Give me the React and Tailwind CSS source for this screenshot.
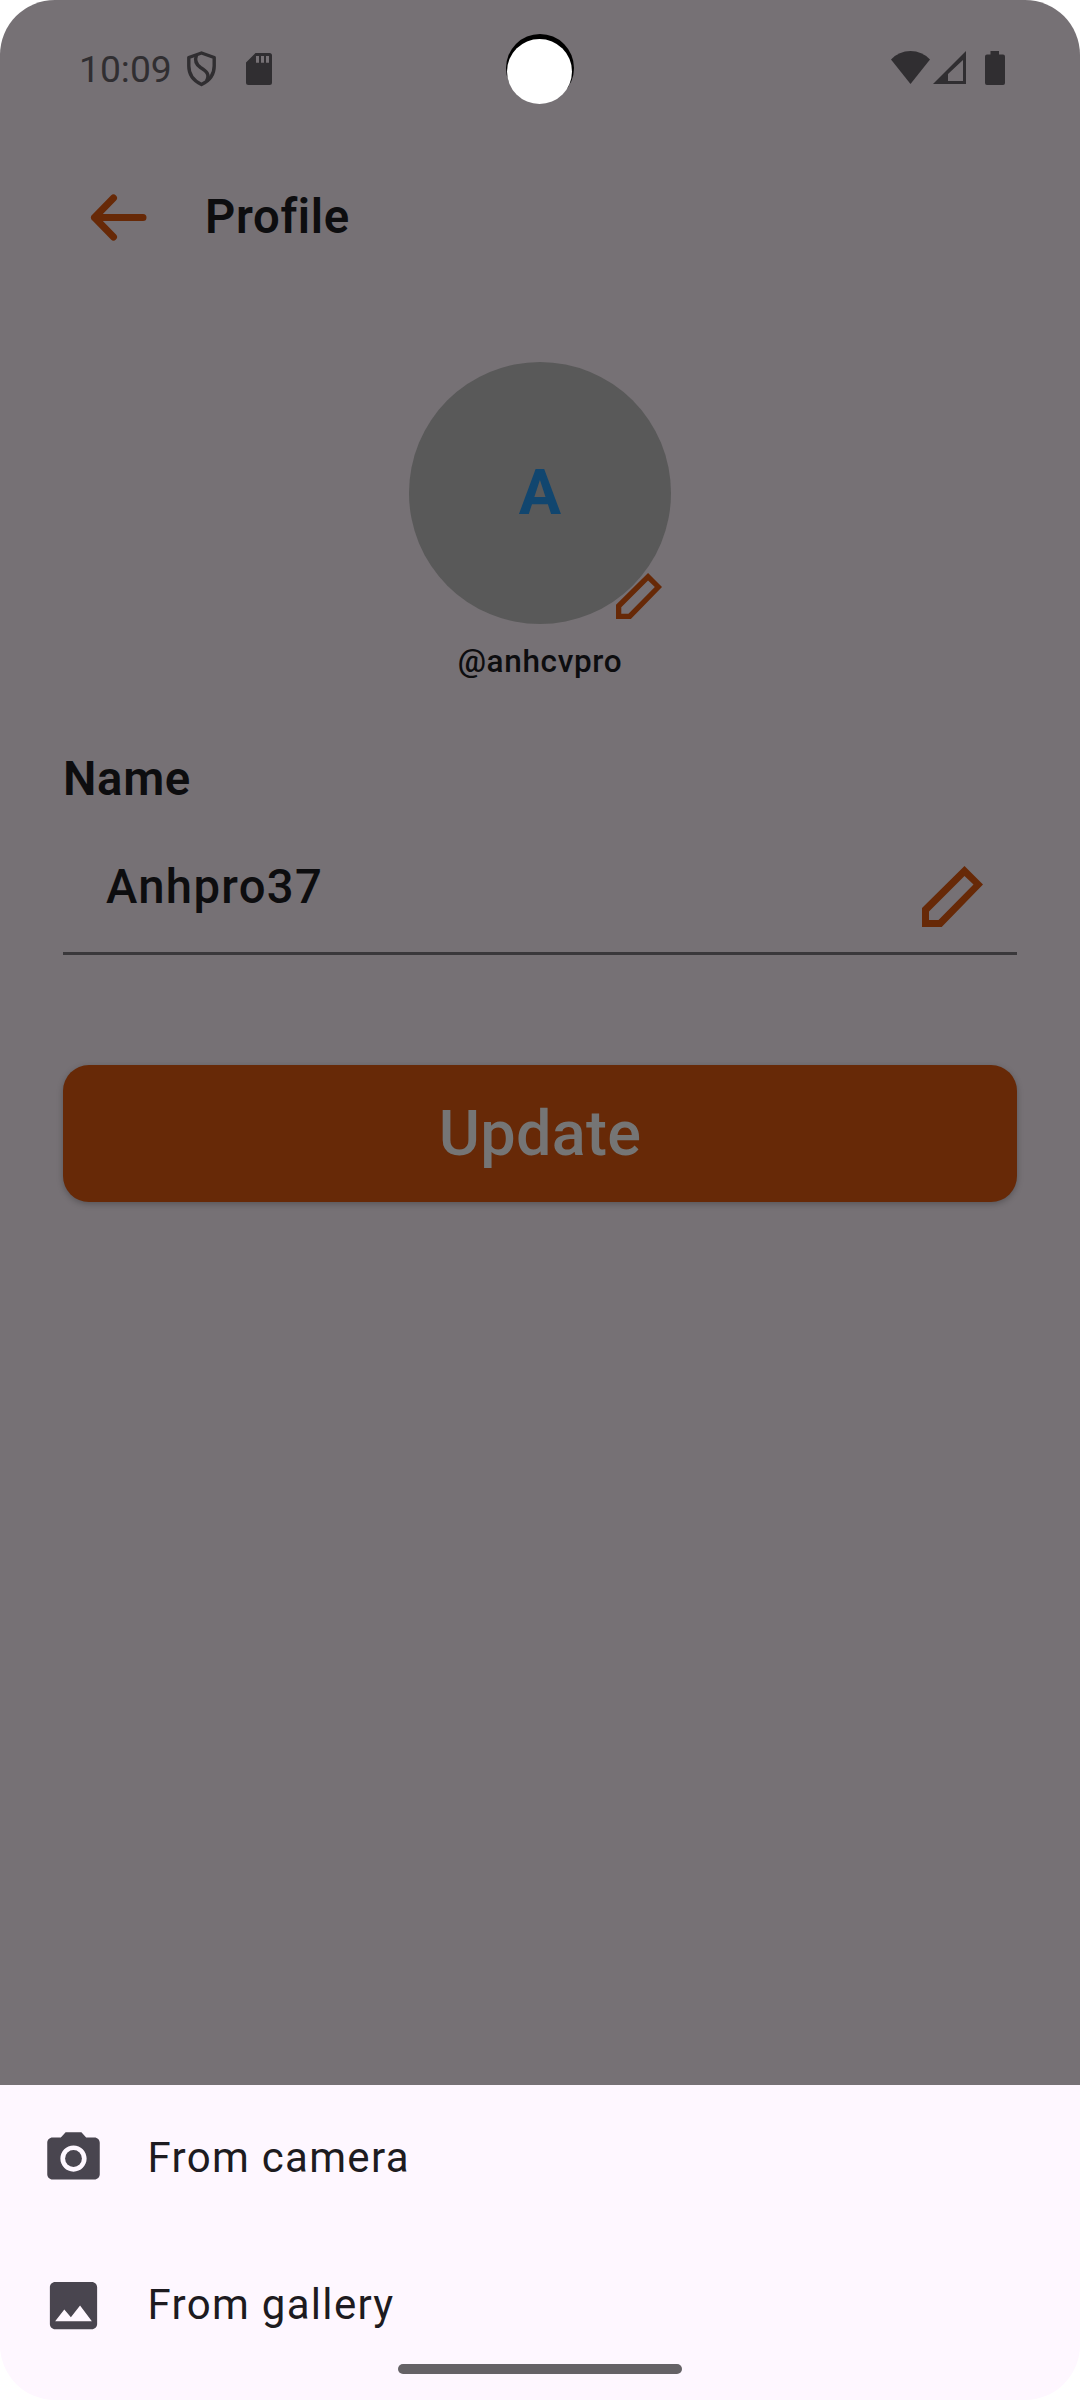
import React from "react";

function Shield() {
  return (
    <svg className="block h-[36px] w-[32px]" viewBox="0 0 32 36" fill="none" stroke="#302e31" strokeWidth="3.4" strokeLinejoin="round">
      <path d="M15.500 2 L28.200 6.500 V15 C28.200 23.500 23 30 15.500 33.500 C8 30 2.800 23.500 2.800 15 V6.500 Z" />
      <path d="M10.500 4 C8.500 9.500 10 13.500 14.500 16.500 C21 20.500 24 23.500 20.500 30" />
    </svg>
  );
}

function SdCard() {
  return (
    <svg className="block h-[32px] w-[26px]" viewBox="0 0 26 32" fill="#302e31" fillRule="evenodd">
      <path d="M9.500 0 H23.500 Q26 0 26 2.500 V29.500 Q26 32 23.500 32 H2.500 Q0 32 0 29.500 V9.500 Z M10 3 V9.700 H13 V3 Z M15 3 V9.700 H18 V3 Z M20 3 V9.700 H23 V3 Z" />
    </svg>
  );
}

function StatusBar() {
  return (
    <div className="relative flex h-[136px] items-center pl-[79px] pr-[75px] text-[#302e31]">
      <span className="mt-px w-[93px] text-[37.25px] leading-[44px]">10:09</span>
      <div className="ml-[14px] mt-[2px]"><Shield /></div>
      <div className="ml-[28px] mt-[2px]"><SdCard /></div>
      <div className="ml-auto flex">
        <svg className="block h-[36px] w-[114px]" viewBox="0 0 114 36" fill="#302e31">
          <path d="M0 9.500 Q8 1 19.500 1 Q31 1 39 9.500 L19.500 34 Z" />
          <path fillRule="evenodd" d="M75 1 V34 H42 Z M72 10 L57 24 V31 H72 Z" />
          <path d="M99.500 1 H108 V4.500 H112 Q114 4.500 114 6.500 V33 Q114 35 112 35 H96 Q94 35 94 33 V6.500 Q94 4.500 96 4.500 H99.500 Z" />
        </svg>
      </div>
      <div className="absolute left-[506px] top-[34px] h-[68px] w-[68px] rounded-full bg-black" />
      <div className="absolute left-[507px] top-[39px] h-[65px] w-[65px] rounded-full bg-white" />
    </div>
  );
}

function Pencil({ className }) {
  return (
    <svg className={className} viewBox="0 0 61 61" fill="#672907" fillRule="evenodd">
      <path d="M42.500 0 L61 18.500 L19.700 61 H0 V42 Z M42.500 10 L7 45.500 V54 H16.500 L51.500 18.500 Z" />
    </svg>
  );
}

export default function App() {
  return (
    <div className="flex h-[2400px] w-[1080px] flex-col bg-white font-[Roboto,sans-serif] text-[#0d0d0f]">
      <main className="h-[2085px] rounded-t-[55px] bg-[#767175]">
        <StatusBar />
        <header className="flex h-[160px] items-center pl-[90px] pt-[2px]">
          <svg className="block h-[48px] w-[58px]" viewBox="0 0 58 48" fill="none" stroke="#672907" strokeWidth="7" strokeLinecap="round" strokeLinejoin="round">
            <path d="M53 24.500 H4.500 M23.500 5 L4.500 24.500 L23.500 44" />
          </svg>
          <h1 className="ml-[57px] text-[47.25px] font-semibold leading-[56px] tracking-[0.66px]">Profile</h1>
        </header>

        <section className="mt-[66px] flex flex-col items-center">
          <div className="relative flex size-[262px] items-center justify-center rounded-full bg-[#595959]">
            <span className="text-[63px] font-bold leading-[74px] text-[#11466f]">A</span>
            <div className="absolute left-[207px] top-[211px]">
              <Pencil className="block size-[46px]" />
            </div>
          </div>
          <p className="mt-[19px] text-[31.5px] font-medium leading-[38px] tracking-[0.66px]">@anhcvpro</p>
        </section>

        <section className="mx-[63px] mt-[70px]">
          <h2 className="text-[47.25px] font-semibold leading-[56px] tracking-[0.66px]">Name</h2>
          <div className="mt-[26px] flex h-[122px] justify-between border-b-[3px] border-[#3a383b] pl-[43px] pr-[34px]">
            <span className="mt-[26px] text-[47.25px] font-medium leading-[56px] tracking-[1.3125px]">Anhpro37</span>
            <Pencil className="mt-[33px] block size-[61px]" />
          </div>
          <button className="mt-[110px] flex h-[137px] w-full items-center justify-center rounded-[26px] bg-[#672907] pt-px text-[63px] font-medium tracking-[0.26px] text-[#757575] shadow-[0_2px_6px_rgba(0,0,0,0.25)]">
            Update
          </button>
        </section>
      </main>

      <footer className="flex h-[315px] flex-col rounded-b-[55px] bg-[#fef7ff] text-[#1d1b20]">
        <div className="flex h-[147px] items-center pl-[42px]">
          <svg className="block size-[63px]" viewBox="0 0 24 24" fill="#49454f">
            <circle cx="12" cy="12" r="3.200" />
            <path d="M9 2 7.170 4H4c-1.100 0-2 .9-2 2v12c0 1.100.9 2 2 2h16c1.100 0 2-.9 2-2V6c0-1.100-.9-2-2-2h-3.170L15 2H9zm3 15c-2.760 0-5-2.240-5-5s2.240-5 5-5 5 2.240 5 5-2.240 5-5 5z" />
          </svg>
          <span className="-mt-[2px] ml-[42.5px] text-[42px] leading-[63px] tracking-[1.3125px]">From camera</span>
        </div>
        <div className="flex h-[147px] items-center pl-[42px]">
          <svg className="block size-[63px]" viewBox="0 0 24 24" fill="#49454f">
            <path d="M21 19V5c0-1.100-.9-2-2-2H5c-1.100 0-2 .9-2 2v14c0 1.100.9 2 2 2h14c1.100 0 2-.9 2-2zM8.500 13.500l2.500 3.010L14.500 12l4.500 6H5l3.500-4.500z" />
          </svg>
          <span className="-mt-[2px] ml-[42.5px] text-[42px] leading-[63px] tracking-[1.3125px]">From gallery</span>
        </div>
        <div className="-mt-[15px] h-[10px] w-[284px] self-center rounded-full bg-[#656266]" />
      </footer>
    </div>
  );
}
